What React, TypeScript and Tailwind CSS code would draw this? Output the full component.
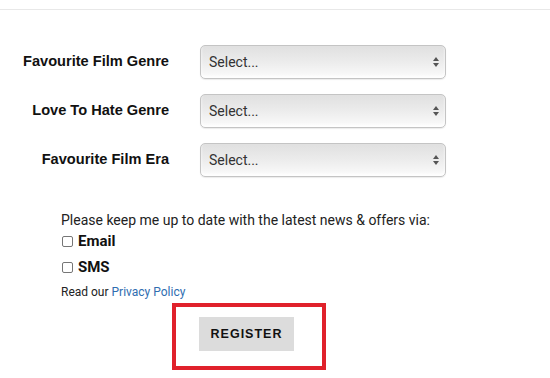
import React from "react";

const rows = ["Favourite Film Genre", "Love To Hate Genre", "Favourite Film Era"];

function FakeSelect() {
  return (
    <div className="relative flex h-[34px] w-[246px] items-center rounded-[5px] border border-[#c4c4c4] bg-gradient-to-b from-[#e0e0e0] via-[#ececec] to-[#fbfbfb] pl-[8px] shadow-[inset_0_-2px_3px_rgba(255,255,255,0.9),0_1px_1px_rgba(0,0,0,0.08)]">
      <span className="font-['Roboto',sans-serif] text-[14px] text-[#333]">Select...</span>
      <svg className="absolute right-[5px] top-[10px]" width="8" height="12" viewBox="0 0 8 12">
        <path d="M4 1 L7 5 L1 5 Z" fill="#555" />
        <path d="M4 11 L7 7 L1 7 Z" fill="#555" />
      </svg>
    </div>
  );
}

export default function App() {
  return (
    <div className="min-h-[378px] w-[550px] bg-white font-['Roboto',sans-serif] text-[#222]">
      {/* Top rule */}
      <div className="h-[10px] border-b border-[#e8e8e8]" />

      {/* Selects */}
      <div className="mt-[35px] flex flex-col gap-[15px]">
        {rows.map((label) => (
          <div key={label} className="flex items-center">
            <label className="w-[169px] text-right font-['Liberation_Sans',Arial,sans-serif] text-[14.6px] font-bold text-[#111]">
              {label}
            </label>
            <div className="ml-[31px]">
              <FakeSelect />
            </div>
          </div>
        ))}
      </div>

      {/* Opt-in */}
      <div className="mt-[34px] pl-[61px]">
        <p className="text-[14px] leading-[18px] text-[#222]">
          Please keep me up to date with the latest news &amp; offers via:
        </p>
        <label className="mt-[3px] flex items-center gap-[5px]">
          <span className="ml-[1px] inline-block h-[11px] w-[11px] rounded-[2px] border border-[#767676] bg-white" />
          <span className="text-[15px] font-bold leading-[18px] text-[#111]">Email</span>
        </label>
        <label className="mt-[8px] flex items-center gap-[5px]">
          <span className="ml-[1px] inline-block h-[11px] w-[11px] rounded-[2px] border border-[#767676] bg-white" />
          <span className="text-[15px] font-bold leading-[18px] text-[#111]">SMS</span>
        </label>
        <p className="mt-[8px] text-[12px] leading-[16px] text-[#222]">
          Read our <a className="text-[#2f6db0]">Privacy Policy</a>
        </p>
      </div>

      {/* Register */}
      <div className="ml-[172px] mt-[3px] h-[67px] w-[154px] border-4 border-[#e0212b] pl-[23px] pt-[10px]">
        <button className="h-[34px] w-[95px] bg-[#dcdcdc] font-['Liberation_Sans',Arial,sans-serif] text-[12.5px] font-bold tracking-[1px] text-[#111]">
          REGISTER
        </button>
      </div>
    </div>
  );
}
